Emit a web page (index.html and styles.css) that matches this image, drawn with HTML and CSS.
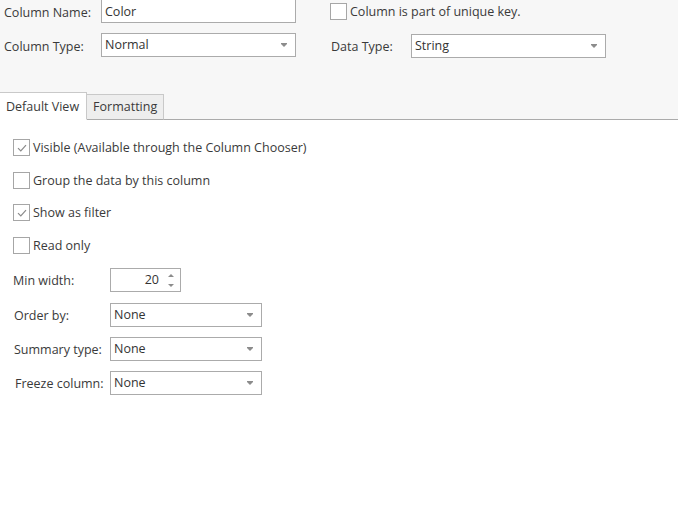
FILE: index.html
```html
<!DOCTYPE html>
<html>
<head>
<meta charset="utf-8">
<link rel="stylesheet" href="styles.css">
</head>
<body>
<div class="top">
  <div class="fields">
    <div class="group left">
      <span class="label tl">Column Name:</span>
      <div class="box text">Color</div>
      <span class="label tl">Column Type:</span>
      <div class="box select">Normal<span class="arrow"></span></div>
    </div>
    <div class="group right">
      <label class="check top-check"><span class="cb"></span><span>Column is part of unique key.</span></label>
      <span class="label tl">Data Type:</span>
      <div class="box select dt">String<span class="arrow"></span></div>
    </div>
  </div>
  <div class="tabs">
    <div class="tab active">Default View</div>
    <div class="tab">Formatting</div>
  </div>
</div>
<div class="content">
  <div class="checks">
    <label class="check"><span class="cb checked"><svg viewBox="0 0 14 14" width="14" height="14"><path d="M3 7.2 L5.8 10 L11 4.2" fill="none" stroke="#8a8a8a" stroke-width="1.2"/></svg></span><span>Visible (Available through the Column Chooser)</span></label>
    <label class="check"><span class="cb"></span><span>Group the data by this column</span></label>
    <label class="check"><span class="cb checked"><svg viewBox="0 0 14 14" width="14" height="14"><path d="M3 7.2 L5.8 10 L11 4.2" fill="none" stroke="#8a8a8a" stroke-width="1.2"/></svg></span><span>Show as filter</span></label>
    <label class="check"><span class="cb"></span><span>Read only</span></label>
  </div>
  <div class="props">
    <span class="label l-min">Min width:</span>
    <div class="box spin"><span class="num">20</span><span class="spinner"><span class="up"></span><span class="down"></span></span></div>
    <span class="label">Order by:</span>
    <div class="box select small">None<span class="arrow"></span></div>
    <span class="label">Summary type:</span>
    <div class="box select small">None<span class="arrow"></span></div>
    <span class="label l-freeze">Freeze column:</span>
    <div class="box select small">None<span class="arrow"></span></div>
  </div>
</div>
</body>
</html>
```
FILE: styles.css
```css
* { box-sizing: border-box; }
html, body { margin: 0; padding: 0; background: #ffffff; }
body {
  font-family: "Open Sans", "Noto Sans", "Liberation Sans", sans-serif;
  font-size: 12.5px;
  color: #3a3a3a;
  width: 678px;
  height: 515px;
  overflow: hidden;
}
.top {
  background: #f7f7f7;
  height: 120px;
  border-bottom: 1px solid #ababab;
  display: flex;
  flex-direction: column;
}
.fields {
  display: flex;
  margin-top: -1px;
  padding-left: 3px;
}
.group {
  display: grid;
  grid-template-rows: 24px 24px;
  row-gap: 10px;
  align-items: center;
}
.left { grid-template-columns: 98px 195px; }
.right { grid-template-columns: 81px 195px; margin-left: 34px; }
.top-check { grid-column: 1 / 3; margin-top: 1px; }
.dt { align-self: start; margin-top: 1px; }
.tl { padding-top: 2px; }
.box {
  height: 24px;
  border: 1px solid #ababab;
  background: #ffffff;
  color: #333333;
  padding: 0 0 0 3px;
  line-height: 21px;
  position: relative;
}
.text { padding-left: 3px; line-height: 23px; }
.select .arrow {
  position: absolute;
  right: 8px;
  top: 10px;
  width: 0;
  height: 0;
  border-left: 3px solid transparent;
  border-right: 3px solid transparent;
  border-top: 3px solid #8c8c8c;
}
.select .arrow::before {
  content: "";
  position: absolute;
  left: -3px;
  top: -4px;
  width: 6px;
  height: 1px;
  background: #8c8c8c;
}
.tabs {
  margin-top: auto;
  margin-bottom: -1px;
  display: flex;
  align-items: flex-end;
}
.tab {
  height: 26px;
  padding: 0 6px;
  border: 1px solid #c9c9c9;
  border-bottom: 1px solid #ababab;
  background: #eeeeee;
  line-height: 24px;
  color: #3a3a3a;
}
.tab + .tab { border-left: none; }
.tab.active {
  height: 28px;
  background: #ffffff;
  border-left: none;
  border-bottom: 1px solid #ffffff;
  padding: 0 7px 0 6px;
  line-height: 28px;
}
.content {
  padding: 19px 0 0 13px;
}
.checks {
  display: flex;
  flex-direction: column;
  gap: 15.7px;
}
.check {
  display: flex;
  align-items: center;
  gap: 3px;
  color: #3a3a3a;
}
.cb {
  width: 17px;
  height: 17px;
  border: 1px solid #a6a6a6;
  background: #ffffff;
  display: flex;
  align-items: center;
  justify-content: center;
  flex: none;
}
.props {
  margin-top: 14px;
  display: grid;
  grid-template-columns: 97px 152px;
  row-gap: 10px;
  align-items: center;
}
.label { padding-left: 1px; }
.l-min { padding-left: 0; }
.l-freeze { padding-left: 2px; }
.spin {
  width: 71px;
  display: flex;
  justify-content: flex-end;
  padding: 0;
  margin-bottom: 1px;
}
.spin .num { padding-right: 4px; }
.spinner {
  width: 17px;
  position: relative;
}
.spinner .up, .spinner .down {
  position: absolute;
  left: 5px;
  width: 0;
  height: 0;
  border-left: 3px solid transparent;
  border-right: 3px solid transparent;
}
.spinner .up { top: 5px; border-bottom: 3px solid #8c8c8c; }
.spinner .down { top: 15px; border-top: 3px solid #8c8c8c; }
```
